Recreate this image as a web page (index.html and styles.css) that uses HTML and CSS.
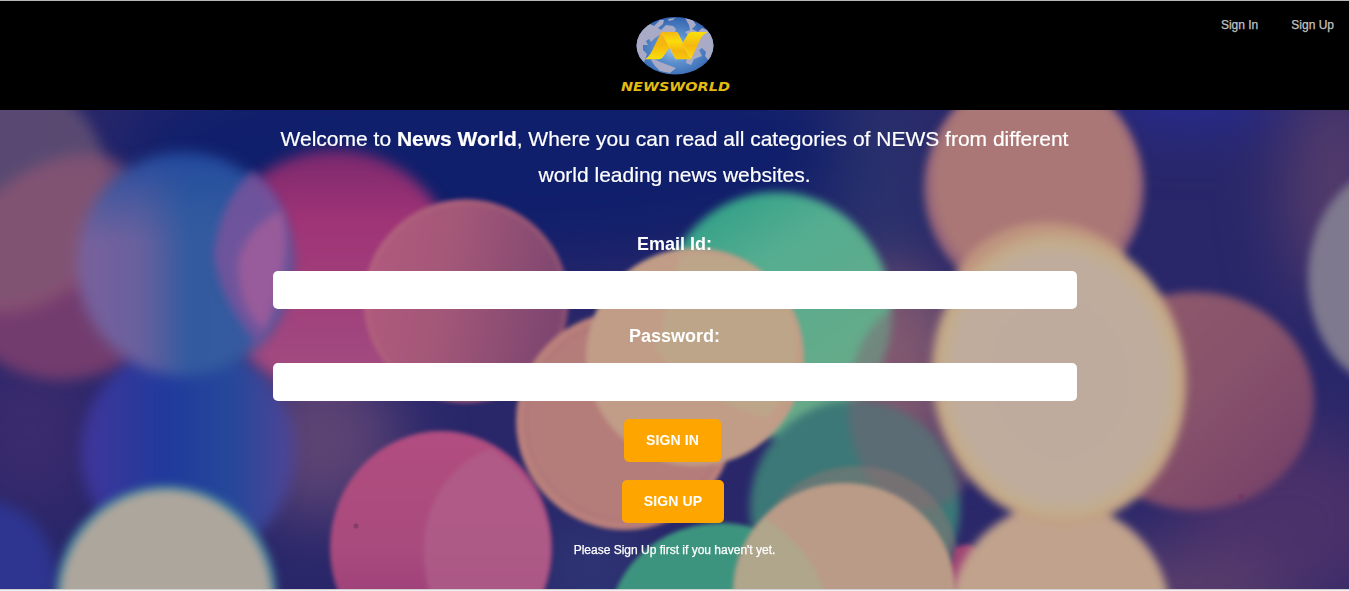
FILE: index.html
```html
<!DOCTYPE html>
<html lang="en">
<head>
<meta charset="utf-8">
<title>News World</title>
<link rel="stylesheet" href="styles.css">
</head>
<body>
<header class="header">
  <svg class="logo" viewBox="0 0 130 90" role="img" aria-label="Newsworld">
    <defs>
      <radialGradient id="sea" cx=".5" cy=".55" r=".55"><stop offset="0" stop-color="#a4cbea"/><stop offset=".45" stop-color="#5c90cc"/><stop offset="1" stop-color="#3262b0"/></radialGradient>
      <linearGradient id="gold" x1="0" y1="0" x2="0" y2="1"><stop offset="0" stop-color="#f0b018"/><stop offset=".5" stop-color="#f6b80c"/><stop offset="1" stop-color="#f8e00e"/></linearGradient>
      <linearGradient id="gold2" x1="0" y1="0" x2="0" y2="1"><stop offset="0" stop-color="#f4b812"/><stop offset=".35" stop-color="#fbdc0c"/><stop offset=".7" stop-color="#f4b40e"/><stop offset="1" stop-color="#f6c80c"/></linearGradient>
      <linearGradient id="gold3" x1="0" y1="0" x2="0" y2="1"><stop offset="0" stop-color="#f8e00c"/><stop offset=".5" stop-color="#f6b80e"/><stop offset="1" stop-color="#f8d80c"/></linearGradient>
      <clipPath id="globe"><ellipse cx="65" cy="35.700" rx="38.500" ry="28.700"/></clipPath>
    </defs>
    <ellipse cx="65" cy="35.700" rx="38.500" ry="28.700" fill="url(#sea)"/>
    <g clip-path="url(#globe)" fill="#a9abc6">
      <path d="M25 26L34 17 40 14 44 16 50 10 54 10 53 14 48 18 51 20 56 15 63 16 66 19 65 23 54 22 48 26 44 29 41 32 39 29 36 31 38 35 33 35 33 40 37 44 34 52 25 44Z"/>
      <path d="M41 50L44 49 50 52 58 55 66 58 60 63 50 61 45 56Z"/>
      <path d="M75 8L83 10 86 15 82 19 88 22 92 18 97 20 106 29 105 46 99 51 95 46 96 42 92 38 89 40 92 46 84 49 81 55 76 53 77 48 80 43 76 36 79 26 75 22 80 20 79 15Z"/>
      <path d="M58 9L65 8 63 10 59 11Z"/>
    </g>
    <path d="M51 22.500L54 22 60 37 53 47Q52 49 49 49.300H34.500Q39 47 42 41Z" fill="url(#gold)"/>
    <path d="M52 22H67.500L81 49.300H65.500Z" fill="url(#gold2)"/>
    <path d="M72 34L78 24Q79.500 22 82 22H98Q93 24 91 28L81 49.300Z" fill="url(#gold3)"/>
    <path d="M52 23L65 48M67.500 23L80 47" stroke="#fff08b" stroke-width=".5" opacity=".5" fill="none"/>
    <text class="logo-name" x="11" y="80.500" textLength="109" lengthAdjust="spacingAndGlyphs">NEWSWORLD</text>
  </svg>
  <nav class="nav"><a href="#">Sign In</a><a href="#">Sign Up</a></nav>
</header>
<main class="main">
  <svg class="backdrop" viewBox="0 110 1349 479" preserveAspectRatio="none" aria-hidden="true" color-interpolation-filters="sRGB">
    <defs>
      <filter id="b2" x="-20%" y="-20%" width="140%" height="140%"><feGaussianBlur stdDeviation="2"/></filter>
      <filter id="b4" x="-20%" y="-20%" width="140%" height="140%"><feGaussianBlur stdDeviation="4"/></filter>
      <filter id="b7" x="-30%" y="-30%" width="160%" height="160%"><feGaussianBlur stdDeviation="7"/></filter>
      <filter id="b35" x="-50%" y="-50%" width="200%" height="200%"><feGaussianBlur stdDeviation="32"/></filter>
      <linearGradient id="teal" x1="0" y1="0" x2=".6" y2="1"><stop offset="0" stop-color="#209a84"/><stop offset=".4" stop-color="#55ad90"/><stop offset="1" stop-color="#6aaa88"/></linearGradient>
      <linearGradient id="pink" x1="0" y1="0" x2="0" y2="1"><stop offset="0" stop-color="#7a286d"/><stop offset=".28" stop-color="#9f3376"/><stop offset="1" stop-color="#a24e82"/></linearGradient>
      <linearGradient id="rose" x1="0" y1="0" x2="1" y2=".2"><stop offset="0" stop-color="#b35a7f"/><stop offset=".45" stop-color="#a45878"/><stop offset="1" stop-color="#7f4670"/></linearGradient>
      <linearGradient id="blue" x1="0" y1="0" x2="1" y2="0"><stop offset="0" stop-color="#79619c"/><stop offset=".3" stop-color="#69609e"/><stop offset=".52" stop-color="#325a9f"/><stop offset="1" stop-color="#395aa0"/></linearGradient>
      <linearGradient id="bluetop" x1="0" y1="0" x2="0" y2="1"><stop offset="0" stop-color="#22489c"/><stop offset=".4" stop-color="#285aa0" stop-opacity="0"/></linearGradient>
      <linearGradient id="deep" x1="0" y1="0" x2="1" y2="0"><stop offset="0" stop-color="#41369a"/><stop offset=".4" stop-color="#203a9c"/><stop offset=".7" stop-color="#25489a"/><stop offset="1" stop-color="#514496"/></linearGradient>
      <linearGradient id="mag" x1="0" y1="0" x2="0" y2="1"><stop offset="0" stop-color="#b24d80"/><stop offset=".5" stop-color="#a94b7d"/><stop offset="1" stop-color="#913578"/></linearGradient>
      <linearGradient id="mauve" x1="0" y1="0" x2="1" y2="1"><stop offset="0" stop-color="#915c6c"/><stop offset=".5" stop-color="#88536b"/><stop offset="1" stop-color="#743d69"/></linearGradient>
      <radialGradient id="cream"><stop offset="0" stop-color="#beab9e"/><stop offset=".83" stop-color="#bfac9c"/><stop offset=".92" stop-color="#c3ad8d"/><stop offset="1" stop-color="#c29d80"/></radialGradient>
    </defs>
    <rect y="110" width="1349" height="479" fill="#29276a"/>
    <g filter="url(#b35)">
      <ellipse cx="500" cy="150" rx="380" ry="110" fill="#101f6b"/>
      <ellipse cx="880" cy="190" rx="50" ry="100" fill="#2a326c"/>
      <ellipse cx="1190" cy="90" rx="90" ry="36" fill="#262c95"/>
      <ellipse cx="1335" cy="190" rx="50" ry="110" fill="#553c6b"/>
      <ellipse cx="1290" cy="520" rx="110" ry="90" fill="#4b316a"/>
      <ellipse cx="1120" cy="600" rx="170" ry="50" fill="#5b3f6c"/>
      <ellipse cx="320" cy="440" rx="80" ry="80" fill="#5d4474"/>
      <ellipse cx="30" cy="430" rx="60" ry="80" fill="#3b2b6d"/>
      <ellipse cx="890" cy="370" rx="60" ry="100" fill="#86576f"/>
      <ellipse cx="590" cy="570" rx="50" ry="40" fill="#303b78"/>
    </g>
    <g filter="url(#b7)">
      <ellipse cx="62" cy="275" rx="112" ry="105" fill="#733c6e"/>
      <ellipse cx="5" cy="190" rx="104" ry="112" fill="#625073" opacity=".85"/>
      <ellipse cx="45" cy="233" rx="103" ry="62" transform="rotate(-38 45 233)" fill="#8d5574" opacity=".7"/>
      <ellipse cx="-12" cy="580" rx="68" ry="78" fill="#2e3590"/>
      <ellipse cx="188" cy="452" rx="107" ry="108" fill="url(#deep)"/>
      <ellipse cx="335" cy="272" rx="121" ry="122" fill="url(#pink)"/>
      <ellipse cx="184" cy="264" rx="107" ry="112" fill="url(#blue)"/>
      <ellipse cx="184" cy="264" rx="107" ry="112" fill="url(#bluetop)"/>
    </g>
    <g filter="url(#b4)">
      <path d="M252 171Q292 203 290 255Q287 310 258 345Q219 300 214 255Q218 205 252 171Z" fill="#7d529b" opacity=".8"/>
      <path d="M282 210Q294 260 265 330Q237 310 238 260Q248 226 282 210Z" fill="#a9609a" opacity=".7"/>
      <ellipse cx="776" cy="314" rx="116" ry="122" fill="url(#teal)"/>
      <ellipse cx="855" cy="507" rx="105" ry="107" fill="#3c7877"/>
      <ellipse cx="920" cy="405" rx="72" ry="105" fill="#805d71" opacity=".45"/>
      <ellipse cx="1195" cy="401" rx="119" ry="109" fill="url(#mauve)"/>
      <ellipse cx="1398" cy="278" rx="90" ry="112" fill="#7e798e"/>
      <ellipse cx="1034" cy="187" rx="110" ry="113" fill="#99677a"/>
    </g>
    <ellipse cx="1034" cy="182" rx="101" ry="108" fill="#ad7b76" opacity=".85" filter="url(#b4)"/>
    <g filter="url(#b2)">
      <ellipse cx="466" cy="301" rx="103" ry="102" fill="url(#rose)"/>
      <ellipse cx="466" cy="301" rx="99" ry="98" fill="none" stroke="#bd827c" stroke-width="2" opacity=".35"/>
      <ellipse cx="625" cy="421" rx="109" ry="109" fill="#b57d7a"/>
      <ellipse cx="625" cy="421" rx="106" ry="106" fill="none" stroke="#c98c80" stroke-width="5" opacity=".3"/>
      <ellipse cx="625" cy="421" rx="98" ry="98" fill="none" stroke="#a06b72" stroke-width="1.500" opacity=".6"/>
      <ellipse cx="695" cy="357" rx="109" ry="109" fill="#c19c87"/>
      <path d="M680 255Q760 245 790 310Q812 370 767 419Q700 400 655 350Z" fill="#bcaa8b" opacity=".65"/>
      <ellipse cx="441" cy="548" rx="111" ry="117" fill="url(#mag)"/>
      <path d="M491 449Q550 488 550 548Q550 571 543 592H429Q414 530 442 487Q466 456 491 449Z" fill="#b0608a" opacity=".72"/>
      <ellipse cx="721" cy="626" rx="112" ry="103" fill="#3d947e"/>
      <ellipse cx="857" cy="557" rx="100" ry="91" fill="#957773" opacity=".45"/>
      <path d="M955 548Q980 535 982 570L958 592H948Z" fill="#a04475"/>
      <ellipse cx="844" cy="591" rx="111" ry="108" fill="#ba9b87"/>
      <path d="M765 518Q812 550 824 592H734Q737 548 765 518Z" fill="#aca98d" opacity=".8"/>
    </g>
    <g filter="url(#b4)">
      <ellipse cx="1060" cy="615" rx="110" ry="112" fill="#c1a28c"/>
      <ellipse cx="166" cy="596" rx="111" ry="111" fill="#427e9a"/>
      <ellipse cx="166" cy="600" rx="106" ry="110" fill="#ada69c"/>
      <ellipse cx="1047" cy="300" rx="96" ry="78" fill="#be947e"/>
      <ellipse cx="1059" cy="378" rx="127" ry="147" transform="rotate(-8 1059 378)" fill="url(#cream)"/>
    </g>
    <g fill="#71355f" opacity=".65"><circle cx="1241" cy="497" r="3"/><circle cx="356" cy="526" r="2.500"/></g>
  </svg>
  <form class="form">
    <p class="intro">Welcome to <b>News World</b>, Where you can read all categories of NEWS from different world leading news websites.</p>
    <label class="label" for="email">Email Id:</label>
    <input class="field" id="email" type="email">
    <label class="label label-second" for="password">Password:</label>
    <input class="field" id="password" type="password">
    <button class="button sign-in" type="button">SIGN IN</button>
    <button class="button sign-up" type="button">SIGN UP</button>
    <p class="note">Please Sign Up first if you haven't yet.</p>
  </form>
</main>
</body>
</html>
```
FILE: styles.css
```css
* { box-sizing: border-box; }
body {
  margin: 0;
  height: 591px;
  overflow: hidden;
  border-top: 1px solid #b4b8b8;
  background: #f0f0f0;
  font-family: "Liberation Sans", Arial, sans-serif;
  color: #fff;
}
.header {
  display: grid;
  grid-template-columns: 1fr 130px 1fr;
  height: 109px;
  background: #000;
}
.logo { grid-column: 2; width: 130px; height: 90px; margin-top: 9px; }
.logo-name {
  font: italic bold 13px "DejaVu Sans", sans-serif;
  fill: #e5bb13;
}
.nav {
  display: flex;
  justify-content: flex-end;
  gap: 33px;
  padding: 17px 15px 0 0;
  font-size: 12px;
  line-height: 14px;
}
.nav a { color: #c4c4c4; text-decoration: none; -webkit-text-stroke: .25px #c4c4c4; }
.main {
  position: relative;
  height: 480px;
  border-bottom: 1px solid #d0d0d0;
  overflow: hidden;
}
.backdrop { position: absolute; inset: 0; width: 100%; height: 479px; }
.form {
  position: relative;
  display: flex;
  flex-direction: column;
  align-items: center;
  width: 804px;
  margin: 0 auto;
  padding-top: 11px;
}
.intro { margin: 0; font-size: 21px; line-height: 36px; text-align: center; -webkit-text-stroke: .2px #fff; }
.label { margin-top: 40px; font-size: 18px; font-weight: bold; line-height: 22px; }
.label-second { margin-top: 16px; }
.field {
  width: 804px;
  height: 38px;
  margin-top: 16px;
  padding: 0 12px;
  border: 0;
  border-radius: 5px;
  background: #fff;
  font-size: 16px;
}
.button {
  height: 43px;
  padding: 0 0 2px;
  margin: 18px 4px 0 0;
  border: 0;
  border-radius: 5px;
  background: #ffa500;
  color: #fff;
  font: bold 14px "Liberation Sans", Arial, sans-serif;
  letter-spacing: .1px;
}
.sign-in { width: 97px; }
.sign-up { width: 102px; margin-right: 3px; }
.note { margin: 20px 0 0; font-size: 12px; line-height: 14px; -webkit-text-stroke: .25px #fff; }
```
